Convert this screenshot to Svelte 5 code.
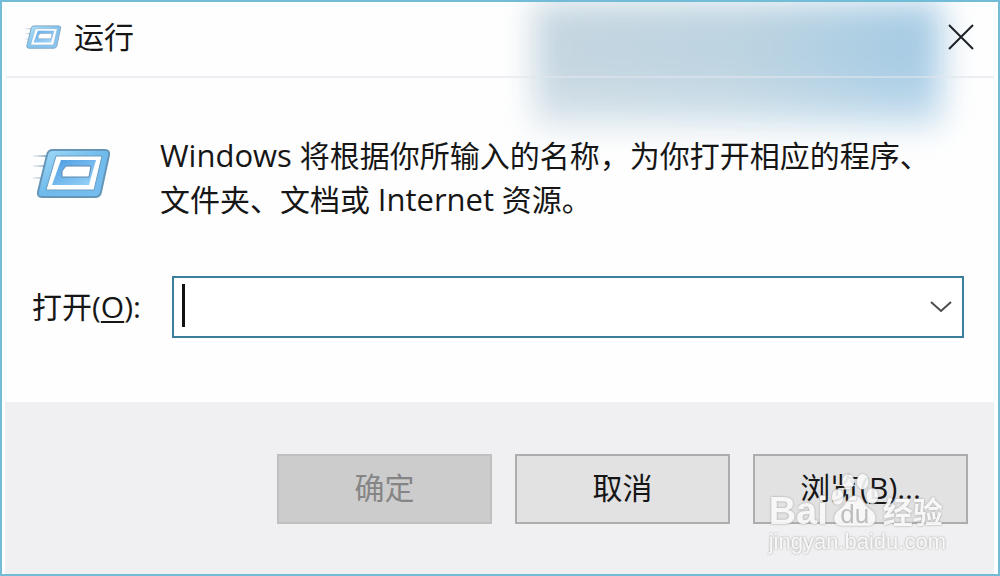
<script lang="ts">
  let command = $state('');
</script>

{#snippet runIcon()}
  <svg viewBox="0 0 80 56" aria-hidden="true">
    <defs>
      <linearGradient id="frame" x1="0" y1="0" x2="1" y2="1">
        <stop offset="0" stop-color="#a5dcf8" />
        <stop offset="0.5" stop-color="#6fbbec" />
        <stop offset="1" stop-color="#79bdf0" />
      </linearGradient>
      <linearGradient id="panel" x1="0" y1="0" x2="1" y2="1">
        <stop offset="0" stop-color="#4a9be2" />
        <stop offset="1" stop-color="#9bd4f8" />
      </linearGradient>
      <linearGradient id="trail">
        <stop offset="0" stop-color="#a9bfd0" stop-opacity="0.2" />
        <stop offset="1" stop-color="#7f9db5" />
      </linearGradient>
    </defs>
    <path d="M1 9H17V11H1ZM1 19H14V21H1ZM1 31H11V33H1Z" fill="url(#trail)" />
    <path d="M21 4H73Q78 4 77 9L69 46Q68 51 63 51H10Q5 51 6 46L15 9Q16 4 21 4Z" fill="url(#frame)" stroke="#6596b8" stroke-width="2" />
    <path d="M24 10H70L62 44H14Z" fill="#fff" stroke="#6a9dc2" stroke-width="1" />
    <path d="M29 14H64L57 39H20Z" fill="url(#panel)" />
    <path d="M34 20H59L57 31H30V25Z" fill="#fff" stroke="#5a87b0" stroke-width="1" />
  </svg>
{/snippet}

<div class="dialog" role="dialog" aria-labelledby="title">
  <div class="smudge"></div>

  <header>
    <span class="small-icon">{@render runIcon()}</span>
    <h1 id="title">运行</h1>
    <button class="close" type="button" aria-label="关闭">
      <svg viewBox="0 0 26 26" aria-hidden="true">
        <path d="M1 1L25 25M25 1L1 25" fill="none" stroke="#1c2126" stroke-width="2" />
      </svg>
    </button>
  </header>

  <main>
    <div class="intro">
      <span class="large-icon">{@render runIcon()}</span>
      <p><span class="word">Windows</span> 将根据你所输入的名称，为你打开相应的程序、<br />文件夹、文档或 <span class="word">Internet</span> 资源。</p>
    </div>

    <div class="open-row">
      <label for="command">打开(<u>O</u>):</label>
      <div class="combo">
        <input id="command" type="text" autocomplete="off" bind:value={command} />
        {#if command === ''}
          <span class="caret"></span>
        {/if}
        <button class="arrow" type="button" aria-label="历史记录">
          <svg viewBox="0 0 22 14" aria-hidden="true">
            <path d="M1 2L11 11L21 2" fill="none" stroke="#4c4c4c" stroke-width="2" />
          </svg>
        </button>
      </div>
    </div>
  </main>

  <footer>
    <button class="action" type="button" disabled={command === ''}>确定</button>
    <button class="action" type="button">取消</button>
    <button class="action" type="button">浏览(<u>B</u>)...</button>
  </footer>

  <div class="watermark">
    <div class="brand">
      <span class="latin">Bai</span>
      <span class="paw">
        <svg viewBox="0 0 50 56" aria-hidden="true">
          <ellipse cx="7" cy="25" rx="6" ry="8" />
          <ellipse cx="18" cy="9" rx="6" ry="8" />
          <ellipse cx="33" cy="9" rx="6" ry="8" />
          <ellipse cx="43" cy="24" rx="6" ry="8" />
          <path d="M25 24C33 24 33 34 41 38C49 43 48 55 38 55H12C1 55 1 43 9 38C17 33 17 24 25 24Z" />
        </svg>
        <span class="du">du</span>
      </span>
      <span class="cjk">经验</span>
    </div>
    <div class="site">jingyan.baidu.com</div>
  </div>
</div>

<style>
  :global(body) {
    margin: 0;
    background: #fff;
  }

  .dialog {
    position: relative;
    display: flex;
    flex-direction: column;
    box-sizing: border-box;
    min-height: 100vh;
    overflow: hidden;
    border: 2px solid #72bcd8;
    background: #fefefe;
    color: #161616;
    font-family: 'Open Sans', 'Noto Sans CJK SC', sans-serif;
    font-size: 30px;
    line-height: 44px;
  }

  /* soft blue patch behind the title bar */
  .smudge {
    position: absolute;
    top: 0;
    right: 56px;
    width: 41%;
    height: 124px;
    background:
      linear-gradient(rgba(255, 255, 255, 0) 55%, rgba(255, 255, 255, 0.4)),
      linear-gradient(100deg, #c6d6e0 0%, #bdd4e1 50%, #a8cce4 88%, #aacde6 100%);
    filter: blur(16px);
  }

  header,
  main {
    position: relative;
  }

  header {
    display: flex;
    align-items: center;
    height: 70px;
    margin: 0 4px;
    padding: 0 18px 4px;
    border-bottom: 2px solid rgba(225, 229, 236, 0.6);
  }

  svg {
    display: block;
    width: 100%;
  }

  .small-icon {
    width: 38px;
    opacity: 0.85;
  }

  h1 {
    flex: 1;
    margin: 0 0 0 12px;
    font-size: 30px;
    font-weight: 400;
  }

  button {
    padding: 0;
    border: 0;
    background: none;
    color: inherit;
    font: inherit;
  }

  .close {
    width: 26px;
    margin-right: 2px;
  }

  main {
    flex: 1;
    padding: 56px 34px 0 30px;
  }

  .intro {
    display: flex;
    gap: 48px;
  }

  .large-icon {
    flex: none;
    width: 80px;
    padding-top: 12px;
  }

  p {
    margin: 0;
  }

  .word {
    font-size: 31px;
    line-height: 40px;
  }

  .open-row {
    display: flex;
    align-items: center;
    margin-top: 54px;
  }

  label {
    flex: none;
    width: 140px;
  }

  u {
    text-decoration-thickness: 2px;
    text-underline-offset: 3px;
  }

  .combo {
    position: relative;
    display: flex;
    flex: 1;
    height: 58px;
    border: 2px solid #3c7f9c;
    background: #fff;
  }

  input {
    flex: 1;
    min-width: 0;
    padding: 0 8px;
    border: 0;
    outline: 0;
    background: none;
    font: inherit;
  }

  .caret {
    position: absolute;
    top: 6px;
    left: 8px;
    width: 3px;
    height: 43px;
    background: #111;
    pointer-events: none;
  }

  .arrow {
    width: 22px;
    margin-right: 10px;
  }

  footer {
    display: flex;
    justify-content: flex-end;
    gap: 23px;
    margin: 0 4px 0 3px;
    padding: 52px 26px 50px;
    background: #f0eff1;
  }

  .action {
    box-sizing: border-box;
    width: 215px;
    height: 70px;
    padding-bottom: 2px;
    border: 2px solid #adadad;
    background: #e2e2e3;
  }

  .action:disabled {
    border-color: #bfbfbf;
    background: #cccccd;
    color: #858585;
  }

  .watermark {
    position: absolute;
    right: 52px;
    bottom: 17px;
    color: #fafafa;
    font-family: 'Liberation Sans', 'Noto Sans CJK SC', sans-serif;
    filter: drop-shadow(0 0 1px #999);
    opacity: 0.9;
    pointer-events: none;
  }

  .brand {
    display: flex;
    align-items: flex-end;
    font-weight: 700;
    line-height: 32px;
  }

  .latin {
    font-size: 38px;
  }

  .paw {
    position: relative;
    width: 48px;
    margin-left: 3px;
    fill: #fafafa;
  }

  .du {
    position: absolute;
    bottom: 0;
    left: 0;
    width: 100%;
    color: #bbb;
    font-size: 26px;
    font-weight: 400;
    line-height: 26px;
    text-align: center;
  }

  .cjk {
    margin-left: 4px;
    font-size: 30px;
    line-height: 28px;
  }

  .site {
    font-size: 22px;
    line-height: 30px;
  }
</style>
